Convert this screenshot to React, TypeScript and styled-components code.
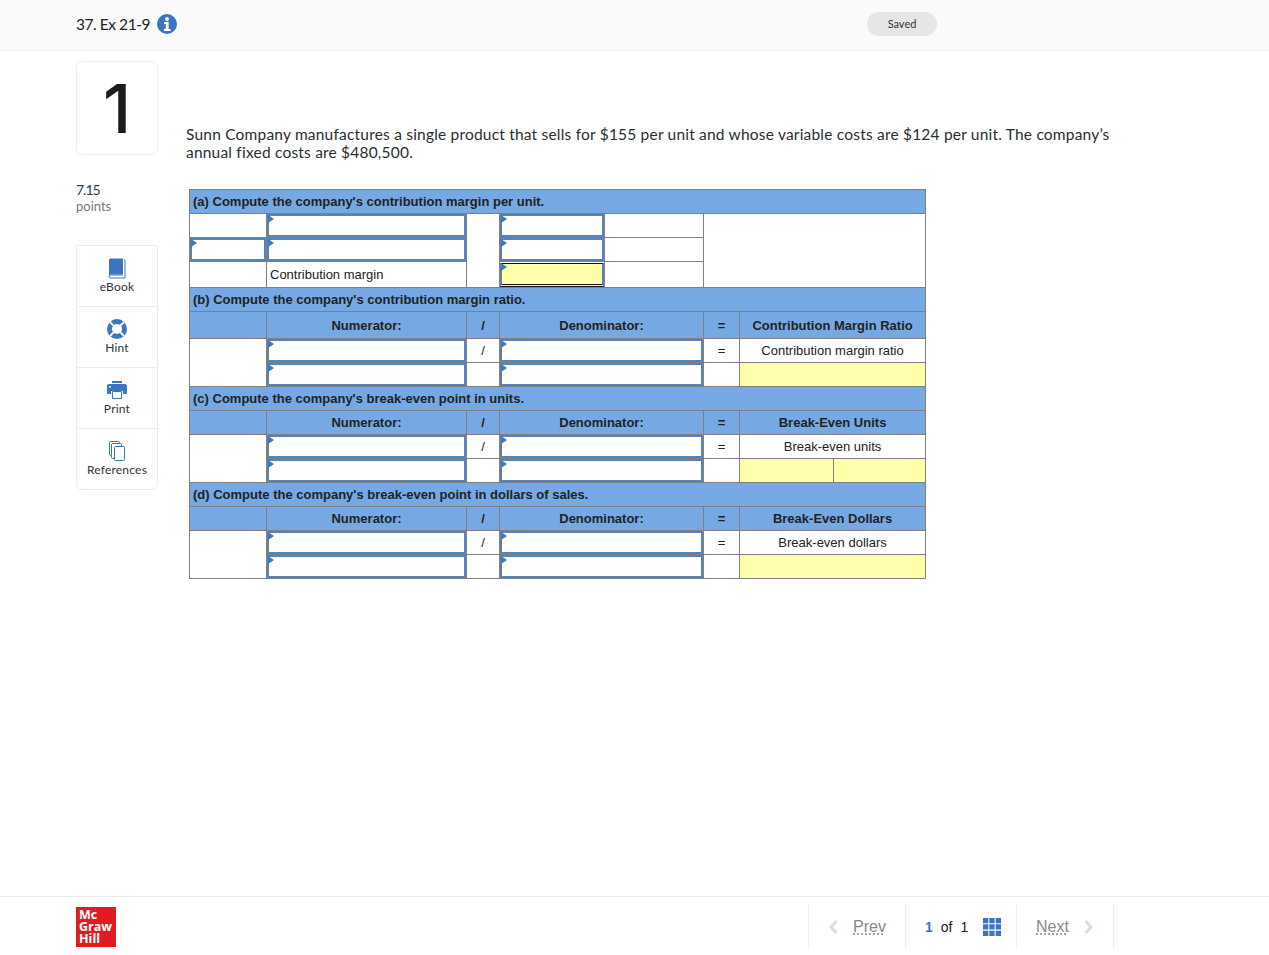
import React from "react";
import styled, { createGlobalStyle } from "styled-components";

const Global = createGlobalStyle`
  html, body { margin: 0; padding: 0; background: #fff; }
  body { font-family: "Lato", "Open Sans", sans-serif; color: #1f2326; }
`;

const Page = styled.div`
  min-height: 955px;
  display: flex;
  flex-direction: column;
`;

const Header = styled.header`
  height: 48px;
  padding: 0 0 2px 76px;
  background: #fafafa;
  border-bottom: 1px solid #eeeeee;
  display: flex;
  align-items: center;
`;
const Title = styled.div`
  font-size: 15.5px;
  letter-spacing: -0.45px;
  line-height: 18px;
  margin-top: -1px;
  width: 81px;
  white-space: nowrap;
`;
const InfoIcon = styled.svg`
  width: 20px;
  height: 20px;
  display: block;
`;
const Saved = styled.div`
  margin-left: 690px;
  width: 70px;
  height: 24px;
  border-radius: 12px;
  background: #e6e6e6;
  color: #333;
  font-size: 11px;
  padding-bottom: 2px;
  box-sizing: border-box;
  display: flex;
  align-items: center;
  justify-content: center;
`;

const Main = styled.main`
  flex: 1;
  display: flex;
  padding: 10px 0 0 76px;
`;
const Side = styled.aside`
  width: 82px;
  flex: none;
`;
const NumberBox = styled.div`
  box-sizing: border-box;
  height: 94px;
  border: 1px solid #efefef;
  border-radius: 6px;
  font-family: "Inter", sans-serif;
  font-weight: 500;
  font-size: 68px;
  line-height: 92px;
  text-align: center;
  color: #1c1c1c;
`;
const Points = styled.div`
  margin-top: 27px;
  font-size: 14px;
  letter-spacing: -1px;
  line-height: 16px;
  color: #2e3f58;
`;
const PointsLabel = styled.div`
  font-size: 13px;
  line-height: 16px;
  color: #777;
`;
const Tools = styled.div`
  margin-top: 31px;
  box-sizing: border-box;
  height: 245px;
  border: 1px solid #ececec;
  border-radius: 0 0 6px 6px;
  display: flex;
  flex-direction: column;
`;
const Tool = styled.div`
  height: 61px;
  flex: none;
  box-sizing: border-box;
  display: flex;
  flex-direction: column;
  align-items: center;
  padding-top: 11px;
  font-size: 12px;
  letter-spacing: 0.2px;
  line-height: 14px;
  color: #2f3438;
  &:first-child { height: 60px; }
  & + & { border-top: 1px solid #ececec; }
`;
const ToolIcon = styled.svg`
  width: 22px;
  height: 22px;
  display: block;
  margin-bottom: 1px;
`;

const Content = styled.div`
  margin-left: 28px;
  width: 945px;
`;
const Prompt = styled.p`
  margin: 64px 0 0;
  font-size: 15.5px;
  letter-spacing: 0.2px;
  line-height: 18px;
  color: #2a2d30;
`;
const Sheet = styled.table`
  margin: 28px 0 0 3px;
  border-collapse: collapse;
  table-layout: fixed;
  width: 737px;
  font-family: "Liberation Sans", Arial, sans-serif;
  font-size: 13px;
  color: #222;
`;
const Row = styled.tr<{ $h?: number }>`
  height: ${(p) => p.$h ?? 24}px;
`;
const Cell = styled.td<{ $align?: string; $tone?: "blue" | "yellow" }>`
  border: 1px solid #808080;
  padding: 0 3px;
  height: 23px;
  line-height: 16px;
  white-space: nowrap;
  text-align: ${(p) => p.$align ?? "center"};
  background: ${(p) => (p.$tone === "blue" ? "#76a9e4" : p.$tone === "yellow" ? "#ffffaa" : "#fff")};
`;
const Section = styled(Cell).attrs({ $tone: "blue", $align: "left" })`
  font-weight: bold;
`;
const Head = styled(Cell).attrs({ $tone: "blue" })<{ $drop?: boolean }>`
  font-weight: bold;
  padding-top: ${(p) => (p.$drop ? 2 : 0)}px;
`;
const EntryCell = styled.td`
  border: 1px solid #808080;
  padding: 0;
  background: #fff;
`;
const Field = styled.div<{ $total?: boolean }>`
  position: relative;
  box-sizing: border-box;
  height: ${(p) => (p.$total ? 24 : 23)}px;
  border: 2px solid #5583ba;
  border-left-color: #66809c;
  background: ${(p) => (p.$total ? "#ffffaa" : "#fff")};
  ${(p) => p.$total && "border-top: 1px solid #111; border-bottom: 3px double #111;"}
  &::before {
    content: "";
    position: absolute;
    left: -1px;
    top: -1px;
    border-left: 6px solid #3d78c2;
    border-top: 4px solid transparent;
    border-bottom: 4px solid transparent;
  }
`;

const Footer = styled.footer`
  height: 58px;
  flex: none;
  border-top: 1px solid #eeeeee;
  display: flex;
  align-items: center;
  padding-left: 76px;
`;
const Logo = styled.div`
  width: 40px;
  height: 40px;
  box-sizing: border-box;
  padding: 2px 0 0 3px;
  background: #e21b23;
  color: #fff;
  font-family: "Open Sans", sans-serif;
  font-weight: 700;
  font-size: 12.5px;
  line-height: 12px;
  margin-top: 2px;
`;
const Pager = styled.nav`
  margin-left: 692px;
  display: flex;
  height: 44px;
  border-left: 1px solid #eeeeee;
  margin-top: 2px;
`;
const PagerPart = styled.div<{ $w: number }>`
  width: ${(p) => p.$w}px;
  box-sizing: border-box;
  border-right: 1px solid #eeeeee;
  display: flex;
  align-items: center;
  padding-left: 19px;
  font-family: "Liberation Sans", Arial, sans-serif;
  font-size: 14px;
`;
const PagerLink = styled.span<{ $gap?: number }>`
  color: #888;
  font-size: 16px;
  margin-left: ${(p) => p.$gap ?? 0}px;
  text-decoration: underline dotted #888;
  text-underline-offset: 2px;
`;
const Chevron = styled.svg<{ $gap?: number }>`
  width: 11px;
  height: 16px;
  display: block;
  margin-left: ${(p) => p.$gap ?? 0}px;
`;
const Count = styled.span<{ $strong?: boolean; $gap?: number }>`
  color: ${(p) => (p.$strong ? "#3b75bd" : "#222")};
  font-weight: ${(p) => (p.$strong ? 700 : 400)};
  margin-left: ${(p) => p.$gap ?? 0}px;
`;
const GridIcon = styled.svg`
  width: 18px;
  height: 18px;
  display: block;
  margin-left: 15px;
`;

const Entry = ({ colSpan, total }: { colSpan?: number; total?: boolean }) => (
  <EntryCell colSpan={colSpan}>
    <Field $total={total} />
  </EntryCell>
);

const RatioBlock = ({ section, result, label, split, tall }: { section: string; result: string; label: string; split?: boolean; tall?: boolean }) => (
  <>
    <Row>
      <Section colSpan={8}>{section}</Section>
    </Row>
    <Row $h={tall ? 27 : 24}>
      <Head $drop={tall} />
      <Head $drop={tall}>Numerator:</Head>
      <Head $drop={tall}>/</Head>
      <Head $drop={tall} colSpan={2}>Denominator:</Head>
      <Head $drop={tall}>=</Head>
      <Head $drop={tall} colSpan={2}>{result}</Head>
    </Row>
    <Row>
      <Cell rowSpan={2} />
      <Entry />
      <Cell>/</Cell>
      <Entry colSpan={2} />
      <Cell>=</Cell>
      <Cell colSpan={2}>{label}</Cell>
    </Row>
    <Row>
      <Entry />
      <Cell />
      <Entry colSpan={2} />
      <Cell />
      {split ? (
        <>
          <Cell $tone="yellow" />
          <Cell $tone="yellow" />
        </>
      ) : (
        <Cell colSpan={2} $tone="yellow" />
      )}
    </Row>
  </>
);

export default function App() {
  return (
    <Page>
      <Global />
      <Header>
        <Title>37. Ex 21-9</Title>
        <InfoIcon viewBox="0 0 20 20">
          <circle cx="10" cy="10" r="10" fill="#3b75bd" />
          <circle cx="10" cy="5" r="1.9" fill="#fff" />
          <path d="M7 8h4.6v7H13.500v2h-6.500v-2h1.700v-5H7z" fill="#fff" />
        </InfoIcon>
        <Saved>Saved</Saved>
      </Header>
      <Main>
        <Side>
          <NumberBox>1</NumberBox>
          <Points>7.15</Points>
          <PointsLabel>points</PointsLabel>
          <Tools>
            <Tool>
              <ToolIcon viewBox="0 0 22 22">
                <path d="M3 3.500A1.800 1.800 0 0 1 4.800 1.500H17v16H5a2 2 0 0 0-2 1.200z" fill="#3b75bd" />
                <path d="M18 3h1v18H5a2 2 0 0 1-2-2 2 2 0 0 1 2-1h12" fill="none" stroke="#3b75bd" strokeWidth="1" />
              </ToolIcon>
              eBook
            </Tool>
            <Tool>
              <ToolIcon viewBox="0 0 22 22">
                <circle cx="11" cy="11" r="7.500" fill="none" stroke="#3b75bd" strokeWidth="5" />
                <g stroke="#fff" strokeWidth="1.800">
                  <path d="M4 4l3.800 3.800M18 4l-3.800 3.800M4 18l3.800-3.800M18 18l-3.800-3.800" />
                </g>
              </ToolIcon>
              Hint
            </Tool>
            <Tool>
              <ToolIcon viewBox="0 0 22 22">
                <path d="M6 2h10v2H6z" fill="#3b75bd" />
                <path d="M1 7a2 2 0 0 1 2-2h16a2 2 0 0 1 2 2v7a1 1 0 0 1-1 1h-3v-3H5v3H2a1 1 0 0 1-1-1z" fill="#3b75bd" />
                <path d="M6.500 12.500h9v7h-9z" fill="#fff" stroke="#3b75bd" />
                <circle cx="4" cy="8" r="0.900" fill="#fff" />
              </ToolIcon>
              Print
            </Tool>
            <Tool>
              <ToolIcon viewBox="0 0 22 22">
                <g fill="#fff" stroke="#3b75bd" strokeWidth="1">
                  <rect x="3.500" y="1.500" width="10" height="14" rx="1" />
                  <rect x="5.500" y="3.500" width="10" height="15" rx="1" />
                  <rect x="8.500" y="6.500" width="10" height="14" rx="1" />
                </g>
              </ToolIcon>
              References
            </Tool>
          </Tools>
        </Side>
        <Content>
          <Prompt>
            Sunn Company manufactures a single product that sells for $155 per unit and whose variable costs are $124 per unit. The company’s annual fixed costs are $480,500.
          </Prompt>
          <Sheet>
            <colgroup>
              <col width="77" />
              <col width="200" />
              <col width="33" />
              <col width="105" />
              <col width="99" />
              <col width="36" />
              <col width="94" />
              <col width="92" />
            </colgroup>
            <tbody>
              <Row>
                <Section colSpan={8}>(a) Compute the company's contribution margin per unit.</Section>
              </Row>
              <Row>
                <Cell />
                <Entry />
                <Cell rowSpan={3} />
                <Entry />
                <Cell />
                <Cell colSpan={3} rowSpan={3} />
              </Row>
              <Row>
                <Entry />
                <Entry />
                <Entry />
                <Cell />
              </Row>
              <Row $h={26}>
                <Cell />
                <Cell $align="left">Contribution margin</Cell>
                <Entry total />
                <Cell />
              </Row>
              <RatioBlock tall section="(b) Compute the company's contribution margin ratio." result="Contribution Margin Ratio" label="Contribution margin ratio" />
              <RatioBlock section="(c) Compute the company's break-even point in units." result="Break-Even Units" label="Break-even units" split />
              <RatioBlock section="(d) Compute the company's break-even point in dollars of sales." result="Break-Even Dollars" label="Break-even dollars" />
            </tbody>
          </Sheet>
        </Content>
      </Main>
      <Footer>
        <Logo>
          Mc<br />Graw<br />Hill
        </Logo>
        <Pager>
          <PagerPart $w={97}>
            <Chevron viewBox="0 0 11 16">
              <path d="M8.500 2L3 8l5.500 6" fill="none" stroke="#cfe0f2" strokeWidth="3" />
            </Chevron>
            <PagerLink $gap={14}>Prev</PagerLink>
          </PagerPart>
          <PagerPart $w={111}>
            <Count $strong>1</Count>
            <Count $gap={8}>of</Count>
            <Count $gap={8}>1</Count>
            <GridIcon viewBox="0 0 18 18">
              <path d="M0 0h5.300v5.300H0zM6.300 0h5.300v5.300H6.300zM12.700 0H18v5.300h-5.300zM0 6.300h5.300v5.300H0zM6.300 6.300h5.300v5.300H6.300zM12.700 6.300H18v5.300h-5.300zM0 12.700h5.300V18H0zM6.300 12.700h5.300V18H6.300zM12.700 12.700H18V18h-5.300z" fill="#3b75bd" />
            </GridIcon>
          </PagerPart>
          <PagerPart $w={97}>
            <PagerLink>Next</PagerLink>
            <Chevron $gap={14} viewBox="0 0 11 16">
              <path d="M2.500 2L8 8l-5.500 6" fill="none" stroke="#cfe0f2" strokeWidth="3" />
            </Chevron>
          </PagerPart>
        </Pager>
      </Footer>
    </Page>
  );
}
